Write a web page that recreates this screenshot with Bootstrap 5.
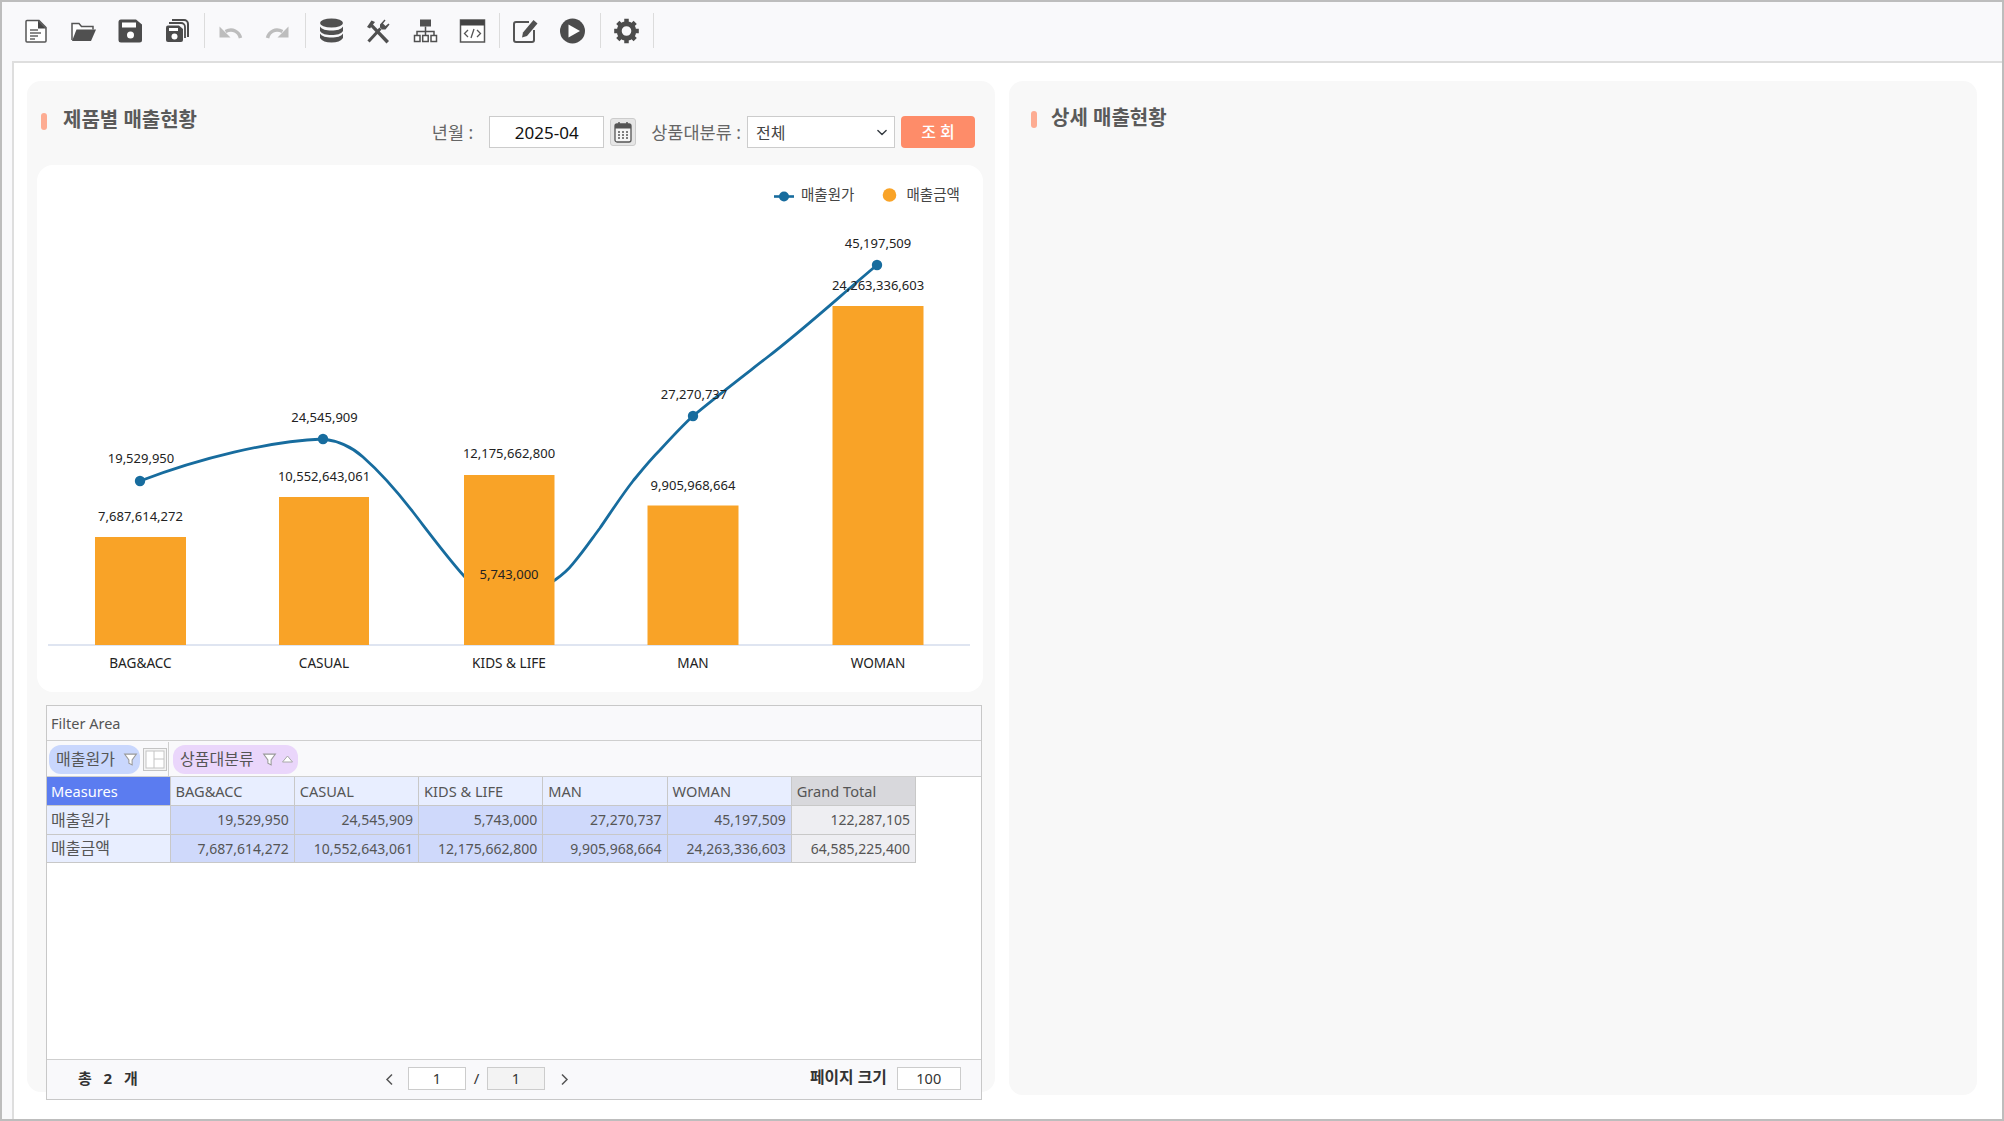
<!DOCTYPE html>
<html lang="ko">
<head>
<meta charset="utf-8">
<title>제품별 매출현황</title>
<link href="https://cdn.jsdelivr.net/npm/bootstrap@5.3.0/dist/css/bootstrap.min.css" rel="stylesheet">
<style>
html,body{margin:0;background:#fff;overflow:hidden}
body{font-family:"Noto Sans","Noto Sans CJK KR",sans-serif;color:#555}
.app-frame{width:2004px;height:1121px;border:2px solid #bdbdbd;background:#f9f9fb}
.tool-bar{height:59px;padding:0 0 2px 10.5px}
.tool-btn{width:47px;height:28px}
.tool-sep{width:1px;height:35px;background:#dcdcdc;margin:0 2px 0 3.5px}
.work-area{height:1058px;margin-left:10px;background:#fff;border-left:2px solid #dedede;border-top:2px solid #dedede;padding:18px 25px 0 13px;gap:14px}
.side-panel{width:968px;background:#f8f8f8;border-radius:14px}
.panel-l{height:1011px;padding:0 12px 0 10px}
.panel-r{height:1014px;padding:26px 0 0 22px}
.panel-head{height:84px}
.title-box{padding:28px 0 0 4px;gap:16px}
.title-tick{width:6px;height:17px;border-radius:3px;background:#fdac92}
.title-txt{font-size:20px;line-height:22px;font-weight:700;color:#5a5a5a;white-space:nowrap}
.panel-r .title-box{padding:0;gap:14px}
.search-row{padding:35px 8px 0 0;height:67px}
.search-lbl{font-size:17.5px;line-height:32px;color:#666;white-space:nowrap}
.date-input.form-control{width:115px;height:32px;border:1px solid #ccc;border-radius:0;padding:0;text-align:center;font-size:17px;color:#111;margin:0 6px 0 16px}
.cal-btn{width:26px;height:28px;background:#e6e6e6;border:1px solid #ccc;border-radius:3px;margin:2px 15px 0 0}
.kind-select.form-select{width:148px;height:32px;border:1px solid #ccc;border-radius:0;padding:2px 24px 0 8px;font-size:16px;color:#444;margin:0 6px;background-position:right 5px center;background-size:14px 11px}
.find-btn.btn{width:74px;height:32px;padding:0;background:#fe8c69;border:0;border-radius:4px;color:#fff;font-size:16px;font-weight:500}
.chart-card{width:946px;height:527px;background:#fff;border-radius:16px}
.chart-card svg{display:block}
.c-lbl{font-size:13px;fill:#222;text-anchor:middle}
.c-lbl.c-x{font-size:13.6px}
.c-leg{font-size:14.500px;fill:#444}
.pivot-box{width:936px;height:395px;margin:13px 0 0 9px;border:1px solid #c8c8c8;background:#fff}
.fil-row{height:35px;background:#f9f9fb;border-bottom:1px solid #cfcfcf;font-size:14.500px;padding:1px 0 0 4px;color:#555}
.axis-row{height:36px;background:#f9f9fb;border-bottom:1px solid #cfcfcf;padding-top:1px}
.axis-a{width:122px;padding-left:2px;border-right:1px solid #cfcfcf;gap:3px}
.axis-b{padding-left:4px}
.pill-a,.pill-b{height:29px;border-radius:12px;font-size:16px;color:#555;padding-left:7px}
.pill-a{width:91px;background:#c9d7fd}
.pill-b{width:125px;background:#ead6fb}
.grid-ico{width:24px;height:23px}
.pvt-tbl{width:869px;table-layout:fixed;border-collapse:collapse;font-size:14px;color:#555}
.pvt-tbl th,.pvt-tbl td{border:1px solid #c8c8c8;padding:0 5px;font-weight:400;white-space:nowrap;overflow:hidden}
.pvt-tbl thead th{height:28px;background:#e8eeff;text-align:left;border-top:0;font-size:14.600px;padding-top:2px}
.pvt-tbl tbody td,.pvt-tbl tbody th{height:28px}
.pvt-tbl tbody tr:first-child td,.pvt-tbl tbody tr:first-child th{height:29px}
.pvt-tbl tbody th{background:#e8eeff;font-size:16px;padding-left:4px}
.pvt-tbl tbody td{background:#cfd9fb;text-align:right}
.pvt-tbl thead .cell-m{background:#5b7cf0;color:#fff;border-left:0;padding-left:4px}
.pvt-tbl tbody th{border-left:0}
.pvt-tbl thead .cell-g{background:#d8d8dc}
.pvt-tbl tbody .cell-g{background:#eeeef2}
.col-first{width:123px}
.pvt-body{flex:1 1 auto}
.pg-foot{height:40px;background:#f9f9fb;border-top:1px solid #cfcfcf;font-size:15px;color:#333;padding-bottom:3px}
.pg-total{width:323px;padding-left:31px;font-weight:700;white-space:pre;word-spacing:2px}
.pg-mid{width:290px;gap:0}
.pg-arrow{width:38px;text-align:center}
.pg-input{width:58px;height:23px;line-height:21px;border:1px solid #ccc;background:#fff;text-align:center;color:#333;font-size:14.500px}
.pg-input.is-off{background:#f3f3f3}
.pg-slash{width:21px;text-align:center}
.pg-size{padding-left:150px;font-size:15.800px;font-weight:700;white-space:nowrap}
.pg-size .pg-input{width:64px;margin-left:10px;font-weight:400}
</style>
</head>
<body>
<div class="app-frame d-flex flex-column">
  <div class="tool-bar d-flex align-items-center">
    <div class="tool-btn"><svg width="47" height="28" viewBox="0 0 47 28"><path d="M14 3.500h12l7 7V24a1 1 0 0 1-1 1H14a1 1 0 0 1-1-1V4.500a1 1 0 0 1 1-1z" fill="#fff" stroke="#555" stroke-width="1.500"/><path d="M25 3.500l8 8h-8z" fill="#444"/><path d="M17 13h8M17 16h11M17 19h8M17 22h5" stroke="#666" stroke-width="1.400"/></svg></div>
    <div class="tool-btn"><svg width="47" height="28" viewBox="0 0 47 28"><path d="M12 23V6.500h7l2.500 3H33v3" fill="#fff" stroke="#555" stroke-width="1.500"/><path d="M16.500 12.500H36L31 24H12z" fill="#505050"/></svg></div>
    <div class="tool-btn"><svg width="47" height="28" viewBox="0 0 47 28"><path d="M14 2.500h15l6 5V23a2.500 2.500 0 0 1-2.500 2.500h-18.500a2.500 2.500 0 0 1-2.500-2.500V5a2.500 2.500 0 0 1 2.500-2.500z" fill="#4c4c4c"/><rect x="15" y="5.500" width="14" height="5" fill="#fff"/><circle cx="23.500" cy="18" r="3.500" fill="#fff"/></svg></div>
    <div class="tool-btn"><svg width="47" height="28" viewBox="0 0 47 28"><path d="M18 3h12a4 4 0 0 1 4 4v13" fill="none" stroke="#4c4c4c" stroke-width="2"/><path d="M15 6h12a4 4 0 0 1 4 4v11" fill="none" stroke="#4c4c4c" stroke-width="1.800"/><path d="M14 8.500h11l4 3.500v11a2 2 0 0 1-2 2H14a2 2 0 0 1-2-2V10.500a2 2 0 0 1 2-2z" fill="#4c4c4c"/><rect x="15" y="11" width="9" height="3" fill="#fff"/><circle cx="20.500" cy="19.500" r="3" fill="#fff"/></svg></div>
    <div class="tool-sep"></div>
    <div class="tool-btn"><svg width="47" height="28" viewBox="0 0 47 28"><path d="M33.500 21c-1.500-6.500-8-10-15-6.500" fill="none" stroke="#bdbdbd" stroke-width="3.500"/><path d="M12.500 9.500v11h11z" fill="#bdbdbd"/></svg></div>
    <div class="tool-btn"><svg width="47" height="28" viewBox="0 0 47 28"><path d="M13.500 21c1.500-6.500 8-10 15-6.500" fill="none" stroke="#bdbdbd" stroke-width="3.500"/><path d="M34.500 9.500v11h-11z" fill="#bdbdbd"/></svg></div>
    <div class="tool-sep"></div>
    <div class="tool-btn"><svg width="47" height="28" viewBox="0 0 47 28"><g fill="#505050"><ellipse cx="23.500" cy="6" rx="11.500" ry="4.500"/><path d="M12 9.500c2 3 6 4 11.500 4S33 12.500 35 9.500V14c-2 3-6 4-11.500 4S14 17 12 14z"/><path d="M12 16.500c2 3 6 4 11.500 4s9.500-1 11.500-4V21c-2 3-6 4.500-11.500 4.500S14 24 12 21z"/></g></svg></div>
    <div class="tool-btn"><svg width="47" height="28" viewBox="0 0 47 28"><path d="M14.500 8.500l2.500-2 17 17.500-2.500 2.500z" fill="#505050"/><path d="M12 10l4.500-6.500 3.500 1.500-5 6.500z" fill="#505050"/><path d="M13.500 24.500l12-13" stroke="#505050" stroke-width="3"/><path d="M25 7.500l4.500-5 1 1-2.500 3 2.500 2.500 3-2.500 1 1-4 5h-3.500l-2-2z" fill="#505050"/></svg></div>
    <div class="tool-btn"><svg width="47" height="28" viewBox="0 0 47 28"><rect x="18" y="2.500" width="11" height="7" fill="#505050"/><path d="M23.500 9.500v5M15 18.500v-4h17v4M23.500 14.500v4" fill="none" stroke="#505050" stroke-width="1.500"/><g fill="#fff" stroke="#505050" stroke-width="1.500"><rect x="12.500" y="18.500" width="5.500" height="6"/><rect x="20.700" y="18.500" width="5.500" height="6"/><rect x="29" y="18.500" width="5.500" height="6"/></g></svg></div>
    <div class="tool-btn"><svg width="47" height="28" viewBox="0 0 47 28"><rect x="11.500" y="3" width="24" height="22" fill="#fff" stroke="#555" stroke-width="1.500"/><rect x="11.500" y="3" width="24" height="5.500" fill="#444"/><path d="M19 13l-3.500 3.500L19 20M28 13l3.500 3.500L28 20M25 12l-3 9" fill="none" stroke="#555" stroke-width="1.300"/></svg></div>
    <div class="tool-sep"></div>
    <div class="tool-btn"><svg width="47" height="28" viewBox="0 0 47 28"><path d="M27 5H14a2 2 0 0 0-2 2v16a2 2 0 0 0 2 2h16a2 2 0 0 0 2-2V13" fill="none" stroke="#555" stroke-width="2"/><path d="M21 15.500L31.500 3l4 3.500L25 19l-5 1.500z" fill="#505050"/></svg></div>
    <div class="tool-btn"><svg width="47" height="28" viewBox="0 0 47 28"><circle cx="23.500" cy="14" r="12.500" fill="#4c4c4c"/><path d="M19.500 7.500L31 14l-11.500 6.500z" fill="#fff"/></svg></div>
    <div class="tool-sep"></div>
    <div class="tool-btn"><svg width="47" height="28" viewBox="0 0 47 28"><g fill="none" stroke="#4c4c4c"><circle cx="23.500" cy="14" r="7.300" stroke-width="5"/><path stroke-width="4.500" d="M23.500 1.700v4M23.500 22.300v4M11.200 14h4M31.800 14h4M14.800 5.300l2.800 2.800M29.400 19.900l2.800 2.800M14.800 22.700l2.800-2.800M29.400 8.100l2.800-2.800"/></g></svg></div>
    <div class="tool-sep"></div>
  </div>
  <div class="work-area d-flex align-items-start">
    <section class="side-panel panel-l">
      <div class="panel-head d-flex justify-content-between">
        <div class="title-box d-flex align-items-start"><span class="title-tick mt-1 flex-shrink-0"></span><span class="title-txt">제품별 매출현황</span></div>
        <div class="search-row d-flex align-items-start">
          <span class="search-lbl">년월 :</span>
          <input class="date-input form-control" value="2025-04" aria-label="년월">
          <span class="cal-btn d-flex align-items-center justify-content-center"><svg width="18" height="22" viewBox="0 0 18 22"><rect x="1" y="3" width="16" height="18" rx="2" fill="#f5f5f5" stroke="#555" stroke-width="1.300"/><rect x="1" y="3" width="16" height="4.500" fill="#555"/><path d="M5 1v4M13 1v4" stroke="#555" stroke-width="1.500"/><path d="M4 11h2M8 11h2M12 11h2M4 14h2M8 14h2M12 14h2M4 17h2M8 17h2M12 17h2" stroke="#555" stroke-width="1.500"/></svg></span>
          <span class="search-lbl">상품대분류 :</span>
          <select class="kind-select form-select" aria-label="상품대분류"><option>전체</option></select>
          <button class="find-btn btn" type="button">조 회</button>
        </div>
      </div>
      <div class="chart-card">
        <svg width="946" height="527" viewBox="37 165 946 527">
          <path d="M48 645H970" stroke="#d4dcec" stroke-width="1.500"/>
          <path fill="none" stroke="#176c9e" stroke-width="2.800" d="M140 481C200 458 270 441 323 439C340 441 352 447 363 457C380 472 396 490 413 512C430 534 447 557 464 576C480 594 495 606 509 606C525 606 540 592 555 580C562 575 568 570 573 563.600C583 552 591 540 600 528C611 512 622 495 633 481C642 470 650 460 660 450C671 438 682 426 693 416C717 396 742 377 767 357.500C804 329 840 296 877 265"/>
          <g fill="#176c9e"><circle cx="140" cy="481" r="5.200"/><circle cx="323" cy="439" r="5.200"/><circle cx="693" cy="416" r="5.200"/><circle cx="877" cy="265" r="5.200"/></g>
          <g fill="#f9a327">
            <rect x="95" y="537" width="91" height="108"/>
            <rect x="279" y="497" width="90" height="148"/>
            <rect x="464" y="475" width="90.500" height="170"/>
            <rect x="647.500" y="505.500" width="91" height="139.500"/>
            <rect x="832.500" y="306" width="91" height="339"/>
          </g>
          <g>
            <text class="c-lbl" x="141" y="463">19,529,950</text>
            <text class="c-lbl" x="324.500" y="421.500">24,545,909</text>
            <text class="c-lbl" x="694" y="399">27,270,737</text>
            <text class="c-lbl" x="878" y="247.500">45,197,509</text>
            <text class="c-lbl" x="509" y="579">5,743,000</text>
            <text class="c-lbl" x="140.500" y="521">7,687,614,272</text>
            <text class="c-lbl" x="324" y="481">10,552,643,061</text>
            <text class="c-lbl" x="509" y="458">12,175,662,800</text>
            <text class="c-lbl" x="693" y="490">9,905,968,664</text>
            <text class="c-lbl" x="878" y="290">24,263,336,603</text>
            <text class="c-lbl c-x" x="140.500" y="668">BAG&amp;ACC</text>
            <text class="c-lbl c-x" x="324" y="668">CASUAL</text>
            <text class="c-lbl c-x" x="509" y="668">KIDS &amp; LIFE</text>
            <text class="c-lbl c-x" x="693" y="668">MAN</text>
            <text class="c-lbl c-x" x="878" y="668">WOMAN</text>
          </g>
          <path d="M774 196.500H794" stroke="#176c9e" stroke-width="2.600"/><circle cx="784" cy="196.500" r="5" fill="#176c9e"/>
          <text class="c-leg" x="801" y="200">매출원가</text>
          <circle cx="889.500" cy="195" r="6.800" fill="#f9a327"/>
          <text class="c-leg" x="906.500" y="200">매출금액</text>
        </svg>
      </div>
      <div class="pivot-box d-flex flex-column">
        <div class="fil-row d-flex align-items-center">Filter Area</div>
        <div class="axis-row d-flex">
          <div class="axis-a d-flex align-items-center">
            <div class="pill-a d-flex align-items-center"><span>매출원가</span><svg class="ms-2" width="15" height="15" viewBox="0 0 14 14"><path d="M1.500 2h11L8.500 7.500V12L5.500 10.500v-3z" fill="#fff" stroke="#9a9a9a"/></svg></div>
            <svg class="grid-ico" viewBox="0 0 24 23"><rect x=".5" y=".5" width="23" height="22" fill="#f4f4f4" stroke="#c4c4c4"/><rect x="3" y="3" width="18" height="17" fill="#fff" stroke="#c4c4c4"/><path d="M11 3v17M11 11h10" stroke="#c4c4c4"/></svg>
          </div>
          <div class="axis-b d-flex align-items-center">
            <div class="pill-b d-flex align-items-center"><span>상품대분류</span><svg class="ms-2" width="15" height="15" viewBox="0 0 14 14"><path d="M1.500 2h11L8.500 7.500V12L5.500 10.500v-3z" fill="#fff" stroke="#9a9a9a"/></svg><svg class="ms-1" width="13" height="10" viewBox="0 0 12 10"><path d="M1 8l5-6 5 6z" fill="#fff" stroke="#a8a8a8"/></svg></div>
          </div>
        </div>
        <div class="pvt-body">
          <table class="pvt-tbl">
            <colgroup><col class="col-first"><col><col><col><col><col><col></colgroup>
            <thead><tr><th class="cell-m">Measures</th><th>BAG&amp;ACC</th><th>CASUAL</th><th>KIDS &amp; LIFE</th><th>MAN</th><th>WOMAN</th><th class="cell-g">Grand Total</th></tr></thead>
            <tbody>
              <tr><th>매출원가</th><td>19,529,950</td><td>24,545,909</td><td>5,743,000</td><td>27,270,737</td><td>45,197,509</td><td class="cell-g">122,287,105</td></tr>
              <tr><th>매출금액</th><td>7,687,614,272</td><td>10,552,643,061</td><td>12,175,662,800</td><td>9,905,968,664</td><td>24,263,336,603</td><td class="cell-g">64,585,225,400</td></tr>
            </tbody>
          </table>
        </div>
        <div class="pg-foot d-flex align-items-center">
          <div class="pg-total">총  2  개</div>
          <div class="pg-mid d-flex align-items-center">
            <span class="pg-arrow"><svg width="9" height="13" viewBox="0 0 9 13"><path d="M7 1.500L2 6.500l5 5" fill="none" stroke="#555" stroke-width="1.500"/></svg></span>
            <span class="pg-input">1</span><span class="pg-slash">/</span><span class="pg-input is-off">1</span>
            <span class="pg-arrow"><svg width="9" height="13" viewBox="0 0 9 13"><path d="M2 1.500l5 5-5 5" fill="none" stroke="#555" stroke-width="1.500"/></svg></span>
          </div>
          <div class="pg-size d-flex align-items-center">페이지 크기<span class="pg-input">100</span></div>
        </div>
      </div>
    </section>
    <section class="side-panel panel-r">
      <div class="title-box d-flex align-items-start"><span class="title-tick mt-1 flex-shrink-0"></span><span class="title-txt">상세 매출현황</span></div>
    </section>
  </div>
</div>
<script src="https://cdn.jsdelivr.net/npm/bootstrap@5.3.0/dist/js/bootstrap.bundle.min.js"></script>
</body>
</html>
